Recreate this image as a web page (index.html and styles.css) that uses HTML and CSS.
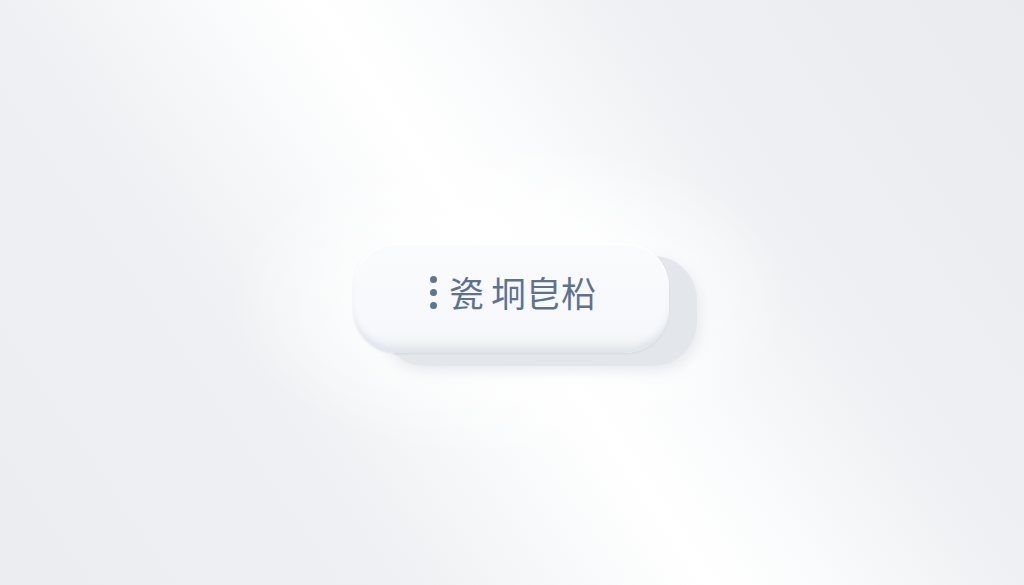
FILE: index.html
```html
<!DOCTYPE html>
<html lang="zh">
<head>
<meta charset="utf-8">
<title>Button</title>
<link rel="stylesheet" href="styles.css">
</head>
<body>
<main class="stage">
  <div class="glow"></div>
  <button class="pill" type="button">
    <span class="dots"><i></i><i></i><i></i></span>
    <span class="label"><span class="first">瓷</span>坰皀柗</span>
  </button>
</main>
</body>
</html>
```
FILE: styles.css
```css
html, body {
  margin: 0;
  padding: 0;
  width: 100%;
  height: 100%;
  overflow: hidden;
}
body {
  background:
    linear-gradient(56deg, #ebedf0 0%, #eef0f3 28%, #f9fafb 42%, #ffffff 50%, #fafbfc 58%, #eef0f3 72%, #e9ebee 100%);
}
.stage {
  position: relative;
  width: 100%;
  height: 100%;
  display: flex;
  align-items: center;
  justify-content: center;
  box-sizing: border-box;
  padding: 10px 2px 0 0;
}
.glow {
  position: absolute;
  left: 230px;
  top: 140px;
  width: 560px;
  height: 320px;
  border-radius: 50%;
  background: radial-gradient(closest-side, rgba(255,255,255,1), rgba(255,255,255,0.7) 50%, rgba(255,255,255,0));
  pointer-events: none;
}
.pill {
  position: relative;
  width: 316px;
  height: 110px;
  border: 0;
  border-radius: 44px;
  background: linear-gradient(180deg, #fafbfd 0%, #f6f8fb 80%, #eef1f5 100%);
  box-shadow:
    inset 0 -9px 6px -3px #e1e5eb,
    inset 0 2px 2px rgba(255,255,255,0.9),
    0 1px 2px rgba(180,188,200,0.35),
    28px 13px 0 0 #e3e6eb,
    30px 18px 14px rgba(190,198,210,0.35);
  display: flex;
  align-items: center;
  justify-content: center;
  gap: 12px;
  padding: 0 0 12px 4px;
  cursor: pointer;
}
.dots {
  display: flex;
  flex-direction: column;
  gap: 6px;
  margin-top: 2px;
}
.dots i {
  display: block;
  width: 7px;
  height: 7px;
  border-radius: 50%;
  background: #5f7590;
}
.label {
  font-family: "Noto Sans CJK SC", "Noto Sans", sans-serif;
  font-size: 35px;
  font-weight: 400;
  color: #5d7290;
  line-height: 1;
  white-space: nowrap;
}
.first {
  margin-right: 7px;
}
```
